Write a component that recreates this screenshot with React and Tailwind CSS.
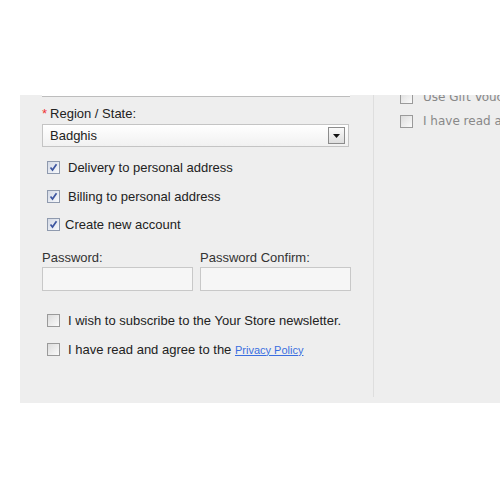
import React from "react";

function Box({ checked }) {
  return (
    <span className={`inline-flex h-[13px] w-[13px] shrink-0 items-center justify-center border ${checked ? "border-[#8f9aae] bg-gradient-to-br from-[#d4dae6] to-[#f7f9fc]" : "border-[#9a9a9a] bg-gradient-to-br from-[#dcdcdc] to-[#fbfbfb]"}`}>
      {checked && (
        <svg width="9" height="9" viewBox="0 0 9 9">
          <path d="M1.5 4.5 L3.5 7 L7.5 1.2" fill="none" stroke="#3c55a0" strokeWidth="1.7" />
        </svg>
      )}
    </span>
  );
}

function Row({ checked, children, gap = "gap-[8px]", h = "h-[29px]" }) {
  return (
    <div className={`flex items-center ${gap} ${h} pl-[5px]`}>
      <Box checked={checked} />
      <span>{children}</span>
    </div>
  );
}

export default function App() {
  return (
    <div className="h-[500px] w-[500px] bg-white pt-[95px] text-[13px] text-[#222]" style={{ fontFamily: '"Liberation Sans", Arial, sans-serif' }}>
      <div className="ml-[20px] flex h-[308px] bg-[#eeeeee]">
        <div className="w-[353px] overflow-hidden pl-[22px]">
          <div className="h-[2px] w-[308px] border-b border-[#bdbdbd] bg-white" />
          <div className="flex h-[27px] items-center pt-[6px]">
            <span className="text-[#e33]">*</span>
            <span className="ml-[3px] text-[#222]">Region / State:</span>
          </div>
          <div className="flex h-[23px] w-[307px] items-center justify-between border border-[#c4c4c4] bg-gradient-to-b from-white to-[#f1f1f1] pl-[7px] pr-[3px]">
            <span>Badghis</span>
            <span className="flex h-[17px] w-[17px] items-center justify-center border border-[#8c8c8c] bg-gradient-to-b from-[#fafafa] to-[#dedede]">
              <svg width="7" height="4" viewBox="0 0 7 4"><path d="M0 0 H7 L3.5 4 Z" fill="#111" /></svg>
            </span>
          </div>
          <div className="mt-[6px]">
            <Row checked>Delivery to personal address</Row>
            <Row checked>Billing to personal address</Row>
            <Row checked gap="gap-[5px]" h="h-[27px]">Create new account</Row>
          </div>
          <div className="mt-[10px] flex gap-[7px]">
            <div className="flex flex-col">
              <span className="h-[19px] text-[#333]">Password:</span>
              <div className="h-[24px] w-[151px] border border-[#c8c8c8] bg-[#f6f6f6]" />
            </div>
            <div className="flex flex-col">
              <span className="h-[19px] text-[#333]">Password Confirm:</span>
              <div className="h-[24px] w-[151px] border border-[#c8c8c8] bg-[#f6f6f6]" />
            </div>
          </div>
          <div className="mt-[15px]">
            <Row>I wish to subscribe to the Your Store newsletter.</Row>
            <Row>
              I have read and agree to the{" "}
              <a className="text-[11px] text-[#3a6ee0] underline">Privacy Policy</a>
            </Row>
          </div>
        </div>
        <div className="mb-[6px] w-px bg-[#dedede]" />
        <div className="flex-1 overflow-hidden pl-[26px] text-[12px] text-[#888]" style={{ fontFamily: '"DejaVu Sans", Verdana, sans-serif' }}>
          <div className="-mt-[10px] flex h-[24px] items-center gap-[10px] whitespace-nowrap">
            <Box />
            <span>Use Gift Voucher</span>
          </div>
          <div className="flex h-[24px] items-center gap-[10px] whitespace-nowrap">
            <Box />
            <span>I have read and agree</span>
          </div>
        </div>
      </div>
    </div>
  );
}
